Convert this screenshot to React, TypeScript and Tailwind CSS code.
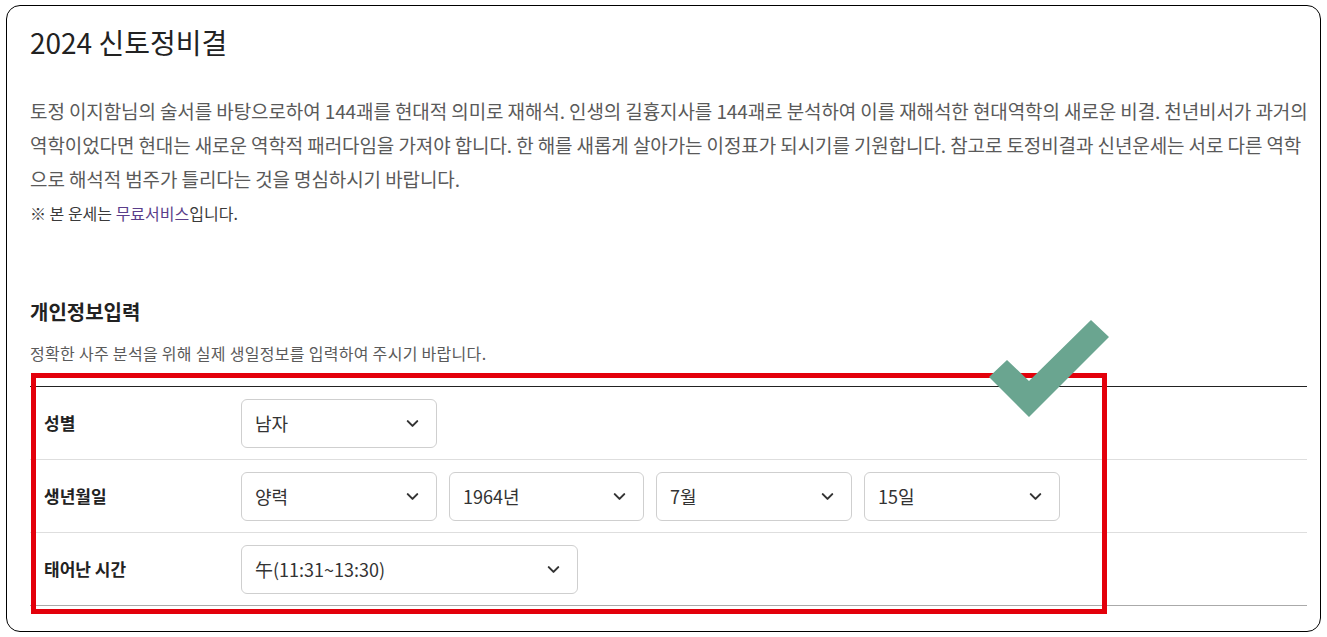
import { ChevronDown } from 'lucide-react';

const font = { fontFamily: '"Noto Sans CJK KR", "Noto Sans", sans-serif' };

const intro = [
  '토정 이지함님의 술서를 바탕으로하여 144괘를 현대적 의미로 재해석. 인생의 길흉지사를 144괘로 분석하여 이를 재해석한 현대역학의 새로운 비결. 천년비서가 과거의',
  '역학이었다면 현대는 새로운 역학적 패러다임을 가져야 합니다. 한 해를 새롭게 살아가는 이정표가 되시기를 기원합니다. 참고로 토정비결과 신년운세는 서로 다른 역학',
  '으로 해석적 범주가 틀리다는 것을 명심하시기 바랍니다.',
];

function Select({ value, width }: { value: string; width: string }) {
  return (
    <div
      className={`${width} h-[49px] flex items-center justify-between pl-[13px] pr-[14px] rounded-[6px] border border-[#cfcfcf] bg-white text-[18px] text-[#333]`}
    >
      <span>{value}</span>
      <ChevronDown size={19} strokeWidth={2.6} className="text-[#333]" />
    </div>
  );
}

function Row({ label, children, last }: { label: string; children: React.ReactNode; last?: boolean }) {
  return (
    <div
      className={`flex items-center h-[73px] border-b ${last ? 'border-[#aaaaaa]' : 'border-[#dedede]'}`}
    >
      <div className="w-[211px] pl-[14px] text-[17px] font-bold text-[#222]">{label}</div>
      <div className="flex items-center gap-[12px]">{children}</div>
    </div>
  );
}

export default function App() {
  return (
    <div className="relative w-[1327px] h-[637px] bg-white overflow-hidden" style={font}>
      <div className="absolute left-[6px] top-[5px] w-[1315px] h-[627px] rounded-[14px] border border-black" />

      <div className="pl-[30px] pr-[20px] pt-[23px]">
        <h1 className="text-[28px] leading-[38px] text-[#222] font-normal">2024 신토정비결</h1>

        <div className="mt-[33px] text-[19px] leading-[34px] text-[#5a5a5a] tracking-[-0.1px]">
          {intro.map((line) => (
            <p key={line} className="whitespace-nowrap">{line}</p>
          ))}
        </div>
        <p className="mt-[6px] text-[16px] leading-[22px] text-[#3a3a3a]">
          ※ 본 운세는 <span className="text-[#5a3d8a]">무료서비스</span>입니다.
        </p>

        <h2 className="mt-[74px] text-[20px] leading-[28px] font-bold text-[#222]">개인정보입력</h2>
        <p className="mt-[16px] text-[16px] leading-[22px] text-[#5a5a5a] tracking-[0.3px]">
          정확한 사주 분석을 위해 실제 생일정보를 입력하여 주시기 바랍니다.
        </p>

        <div className="mt-[22px] w-[1277px] border-t border-[#222]">
          <Row label="성별">
            <Select value="남자" width="w-[196px]" />
          </Row>
          <Row label="생년월일">
            <Select value="양력" width="w-[196px]" />
            <Select value="1964년" width="w-[195px]" />
            <Select value="7월" width="w-[196px]" />
            <Select value="15일" width="w-[196px]" />
          </Row>
          <Row label="태어난 시간" last>
            <Select value="午(11:31~13:30)" width="w-[337px]" />
          </Row>
        </div>
      </div>

      <div className="absolute left-[31px] top-[373px] w-[1076px] h-[241px] border-[5px] border-[#e3000b] pointer-events-none" />

      <svg className="absolute left-0 top-0 pointer-events-none" width="1327" height="637">
        <polygon
          points="989,377 1007,360 1029,381 1091,320 1109,337 1029,417"
          fill="#6aa590"
        />
      </svg>
    </div>
  );
}
